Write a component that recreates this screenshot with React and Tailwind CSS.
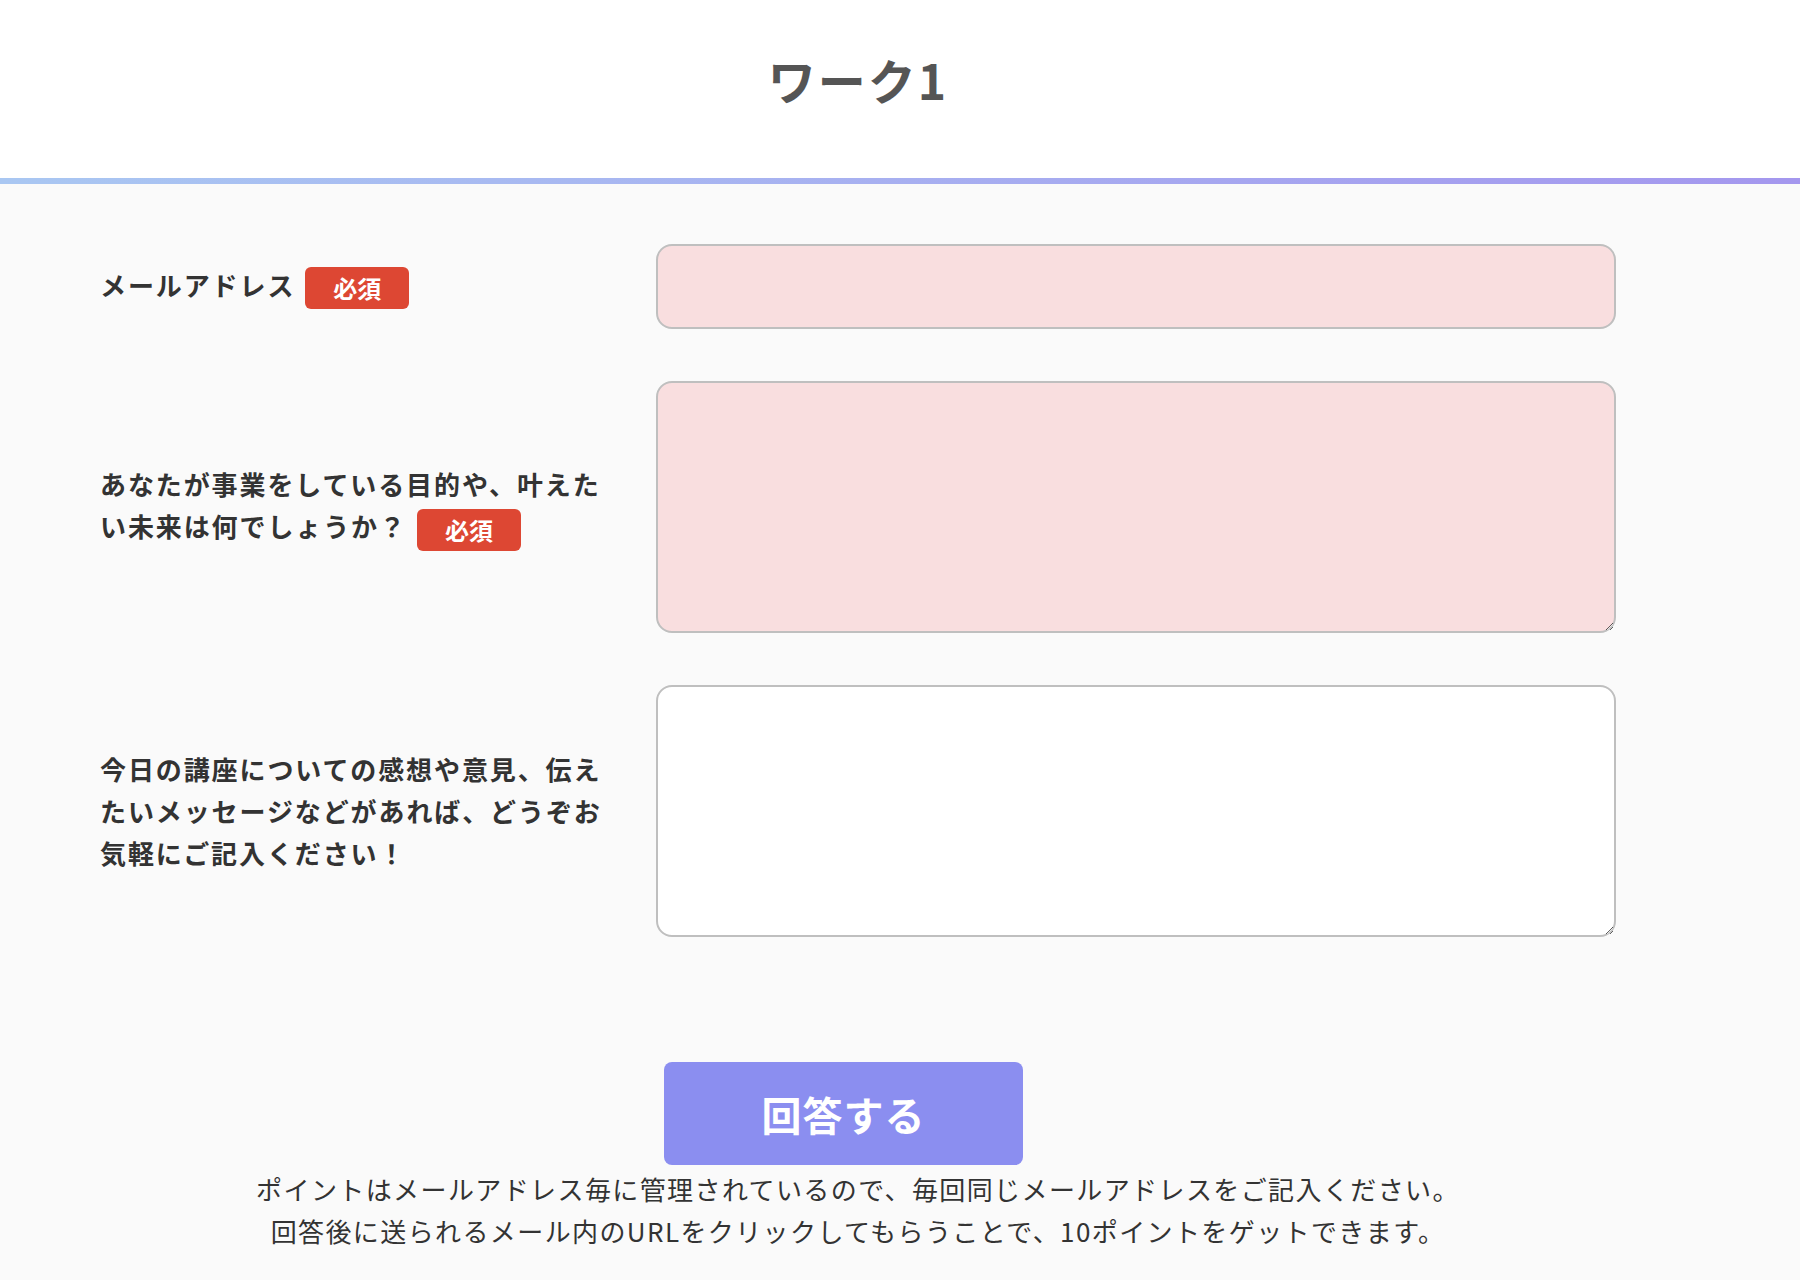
const FONT = { fontFamily: '"Noto Sans CJK JP", "Noto Sans", sans-serif' }

function Badge() {
  return (
    <span className="inline-flex items-center justify-center align-middle w-[104px] h-[42px] ml-[10px] rounded-[6px] bg-[#dd4733] text-white text-[24px] font-bold tracking-normal leading-none">
      必須
    </span>
  )
}

function Field({ label, required, children }) {
  return (
    <div className="grid grid-cols-[510px_960px] gap-x-[46px] items-center">
      <div className="text-[26px] leading-[42px] tracking-[1.9px] font-bold text-[#333333]">
        {label}
        {required && <Badge />}
      </div>
      {children}
    </div>
  )
}

export default function App() {
  return (
    <div className="min-h-screen bg-[#fafafa]" style={FONT}>
      <header className="bg-white h-[178px] flex items-center pb-[20px]">
        <div className="w-[1516px] ml-[100px] text-center">
          <h1 className="text-[48px] font-bold text-[#555555] tracking-[2px] leading-none">ワーク1</h1>
        </div>
      </header>
      <div className="h-[6px] bg-gradient-to-r from-[#a9c7f2] to-[#a497ee]" />

      <main className="pl-[100px] pt-[60px] pb-10">
        <form className="w-[1516px] flex flex-col gap-[52px]">
          <Field label="メールアドレス" required>
            <input
              type="email"
              className="h-[85px] w-full rounded-[16px] border-2 border-[#bfbfbf] bg-[#f9dedf] px-4 text-[24px] outline-none"
            />
          </Field>
          <Field label="あなたが事業をしている目的や、叶えたい未来は何でしょうか？" required>
            <textarea className="h-[252px] w-full rounded-[16px] border-2 border-[#bfbfbf] bg-[#f9dedf] p-4 text-[24px] outline-none" />
          </Field>
          <Field label="今日の講座についての感想や意見、伝えたいメッセージなどがあれば、どうぞお気軽にご記入ください！">
            <textarea className="h-[252px] w-full rounded-[16px] border-2 border-[#bfbfbf] bg-white p-4 text-[24px] outline-none" />
          </Field>

          <div className="grid grid-cols-[510px_960px] gap-x-[46px] mt-[73px]">
            <div />
            <button
              type="submit"
              className="ml-2 w-[359px] h-[103px] rounded-[8px] bg-[#8b8ef0] text-white text-[40px] font-bold tracking-[1px]"
            >
              回答する
            </button>
          </div>
        </form>
        <div className="w-[1516px] mt-[3px] text-center text-[26px] leading-[42px] tracking-[1.4px] text-[#333333]">
          <p>ポイントはメールアドレス毎に管理されているので、毎回同じメールアドレスをご記入ください。</p>
          <p>回答後に送られるメール内のURLをクリックしてもらうことで、10ポイントをゲットできます。</p>
        </div>
      </main>
    </div>
  )
}
